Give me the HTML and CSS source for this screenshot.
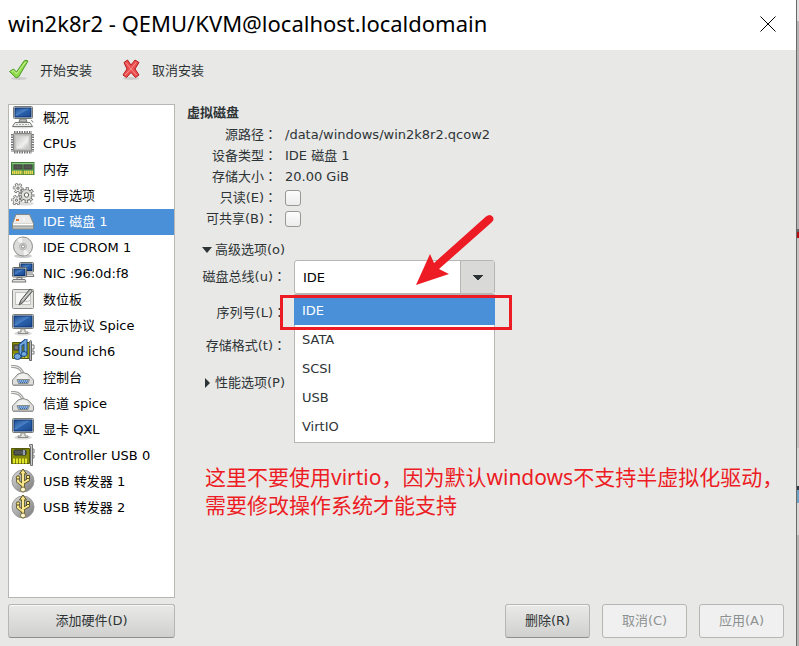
FILE: index.html
```html
<!DOCTYPE html>
<html lang="zh-CN">
<head>
<meta charset="utf-8">
<meta name="viewport" content="width=device-width, initial-scale=1">
<title>win2k8r2 - QEMU/KVM@localhost.localdomain</title>
<link rel="stylesheet" href="styles.css">
</head>
<body>
<svg class="defs" aria-hidden="true">
  <defs>
    <linearGradient id="screen" x1="0" y1="0" x2="1" y2="1"><stop offset="0" stop-color="#1c4a90"/><stop offset=".45" stop-color="#4a80c4"/><stop offset=".5" stop-color="#2b62ad"/><stop offset="1" stop-color="#1a478c"/></linearGradient>
    <linearGradient id="metal" x1="0" y1="0" x2="1" y2="1"><stop offset="0" stop-color="#c4c4c2"/><stop offset=".6" stop-color="#f0f0ee"/><stop offset="1" stop-color="#b4b4b2"/></linearGradient>
    <linearGradient id="usbgrey" x1="0" y1="0" x2="1" y2="1"><stop offset="0" stop-color="#dcdcdc"/><stop offset="1" stop-color="#777"/></linearGradient>
    <symbol id="i-computer" viewBox="0 0 24 24">
      <ellipse cx="12" cy="22" rx="11" ry="1.5" fill="#ddd"/>
      <rect x="2.5" y="1.5" width="19" height="12" rx="1" fill="#e8e8e4" stroke="#777a75"/>
      <rect x="4" y="3" width="16" height="9" fill="url(#screen)" stroke="#0c3270"/>
      <path d="M9 14h6l1 3H8z" fill="#bbb" stroke="#777a75"/>
      <path d="M4 17.5h15l2.5 4h-20z" fill="#eee" stroke="#777a75"/>
      <path d="M5 19.500h13" stroke="#aaa" stroke-dasharray="2 1"/>
      <path d="M20 15.5q2 0 2 2" fill="none" stroke="#888"/>
    </symbol>
    <symbol id="i-cpu" viewBox="0 0 24 24">
      <path d="M1.5 3v18M21.500 3v18" stroke="#777" stroke-width="3" stroke-dasharray="1.500 1"/>
      <path d="M3 1.500h18M3 21h18" stroke="#777" stroke-width="3" stroke-dasharray="1.500 1"/>
      <rect x="2.500" y="2.500" width="18" height="17.500" rx="1" fill="#b7b7b5" stroke="#858583"/>
      <rect x="5" y="5" width="13" height="13" fill="url(#metal)" stroke="#d0d0ce"/>
    </symbol>
    <symbol id="i-ram" viewBox="0 0 24 24">
      <rect x=".5" y="5.500" width="22.500" height="12" fill="#5ea559" stroke="#3d7b36"/>
      <rect x="3" y="8" width="8" height="4" fill="#555753" stroke="#444"/>
      <rect x="13" y="8" width="8" height="4" fill="#555753" stroke="#444"/>
      <path d="M1 6.500h22" stroke="#8bc884"/>
      <path d="M1 15.500h21" stroke="#edd64b" stroke-width="3.500" stroke-dasharray="1.500 .5"/>
      <path d="M12 11v6" stroke="#3d7b36"/>
    </symbol>
    <symbol id="i-gears" viewBox="0 0 24 24">
      <ellipse cx="14" cy="20.500" rx="9" ry="2" fill="#ddd"/>
      <g id="big">
        <circle cx="15.500" cy="12" r="6.500" fill="none" stroke="#62645f" stroke-width="3" stroke-dasharray="2.900 2.200" stroke-dashoffset="1.450"/>
        <circle cx="15.500" cy="12" r="5.900" fill="#62645f"/>
        <circle cx="15.500" cy="12" r="6.200" fill="none" stroke="#dededb" stroke-width="2.400" stroke-dasharray="1.500 3.370" stroke-dashoffset=".75"/>
        <circle cx="15.500" cy="12" r="5" fill="#dededb"/>
        <circle cx="15.500" cy="12" r="2.200" fill="#fff" stroke="#62645f"/>
      </g>
      <g id="small">
        <circle cx="7" cy="5.200" r="4" fill="none" stroke="#62645f" stroke-width="2.400" stroke-dasharray="2.500 1.690" stroke-dashoffset="1.250"/>
        <circle cx="7" cy="5.200" r="3.600" fill="#62645f"/>
        <circle cx="7" cy="5.200" r="3.600" fill="none" stroke="#ececea" stroke-width="2" stroke-dasharray="1.300 2.470" stroke-dashoffset=".65"/>
        <circle cx="7" cy="5.200" r="2.900" fill="#ececea"/>
        <circle cx="7" cy="5.200" r="1.100" fill="#fff" stroke="#62645f"/>
      </g>
      <g transform="translate(-1.500 12)">
        <circle cx="7" cy="5.200" r="4" fill="none" stroke="#62645f" stroke-width="2.400" stroke-dasharray="2.500 1.690" stroke-dashoffset="1.250"/>
        <circle cx="7" cy="5.200" r="3.600" fill="#62645f"/>
        <circle cx="7" cy="5.200" r="3.600" fill="none" stroke="#ececea" stroke-width="2" stroke-dasharray="1.300 2.470" stroke-dashoffset=".65"/>
        <circle cx="7" cy="5.200" r="2.900" fill="#ececea"/>
        <circle cx="7" cy="5.200" r="1.100" fill="#fff" stroke="#62645f"/>
      </g>
    </symbol>
    <symbol id="i-drive" viewBox="0 0 24 24">
      <path d="M5 5.500h13.500l4 9v4.500q0 1-1 1h-19q-1 0-1-1v-4.500z" fill="#d7d7d4" stroke="#858782"/>
      <path d="M5.500 6h12.500l3.500 8h-19z" fill="#ecebe9"/>
      <path d="M2 15.500h20" stroke="#fff"/>
      <path d="M2 17.500h20" stroke="#aaaba7" stroke-width="2"/>
      <rect x="5" y="10" width="3" height="2" fill="#e8792a"/>
      <path d="M13 8v4" stroke="#fff"/>
    </symbol>
    <symbol id="i-disc" viewBox="0 0 24 24">
      <ellipse cx="12" cy="21" rx="9" ry="2" fill="#ccc"/>
      <circle cx="12" cy="11.500" r="9.500" fill="#dcdcda" stroke="#8d8f8b"/>
      <path d="M12 11.500L6 4.500Q9 2.500 11 2.500zM12 11.500l6 7q-3 2-5 2z" fill="#f4f4f2"/>
      <circle cx="12" cy="11.500" r="3.500" fill="#d2d2d0" stroke="#b4b4b2"/>
      <circle cx="12" cy="11.500" r="1.600" fill="#fff" stroke="#888"/>
    </symbol>
    <symbol id="i-nic" viewBox="0 0 24 24">
      <rect x="8.500" y="1.500" width="14" height="9.500" rx="1" fill="#e8e8e4" stroke="#666863"/>
      <rect x="10" y="3" width="11" height="6.500" fill="url(#screen)" stroke="#0c3270"/>
      <path d="M12 13h10l1 2.500H13z" fill="#e0e0dc" stroke="#777"/>
      <rect x="1.500" y="6.500" width="14" height="9.500" rx="1" fill="#e8e8e4" stroke="#666863"/>
      <rect x="3" y="8" width="11" height="6.500" fill="url(#screen)" stroke="#0c3270"/>
      <path d="M6 16.500h5v2H6zM2 18.500h12l1 2.500H1z" fill="#e0e0dc" stroke="#777"/>
    </symbol>
    <symbol id="i-tablet" viewBox="0 0 24 24">
      <rect x="1.500" y="2.500" width="21" height="19" rx="1" fill="#e5e5e2" stroke="#8c8e89"/>
      <rect x="4.500" y="5.500" width="15" height="12" fill="#f7f7f5" stroke="#c2c3c0"/>
      <path d="M8 16q3-4 6-2t5-1" fill="none" stroke="#b8bab6"/>
      <path d="M8 18l2-5L19 2l2.500 2L12 15.500z" fill="#a5a7a3" stroke="#555753"/>
      <path d="M11 13.500L20 3.500" stroke="#e6e6e4"/>
    </symbol>
    <symbol id="i-display" viewBox="0 0 24 24">
      <ellipse cx="12" cy="20.500" rx="9" ry="2" fill="#ddd"/>
      <rect x="1.500" y="1.500" width="21" height="14" rx="1" fill="#e8e8e4" stroke="#777a75"/>
      <rect x="3" y="3" width="18" height="11" fill="url(#screen)" stroke="#0c3270"/>
      <path d="M10 16h4v3h3v1.500H7V19h3z" fill="#e4e4e0" stroke="#8b8d88"/>
    </symbol>
    <symbol id="i-sound" viewBox="0 0 24 24">
      <path d="M1.500 3.500h17v16h-17z" fill="#8a8f08" stroke="#555a05"/>
      <rect x="3" y="6" width="5" height="5" fill="#777" stroke="#333"/>
      <path d="M2 17h15" stroke="#c9ca3c" stroke-width="4" stroke-dasharray="2 1"/>
      <path d="M18.500 2.500q2-2 2 0v19h-2z" fill="#bbb" stroke="#666"/>
      <path d="M21 6h2v4h-2M21 12h2v3h-2" fill="none" stroke="#777"/>
      <path d="M9.500 18.500V6q3-2 5-4v13" fill="none" stroke="#174784" stroke-width="4"/>
      <path d="M9.500 17V6q3-2 5-4v13" fill="none" stroke="#72a7df" stroke-width="2"/>
      <ellipse cx="6.500" cy="17.500" rx="3.500" ry="3" fill="#72a7df" stroke="#174784"/>
      <ellipse cx="13" cy="15" rx="3" ry="2.500" fill="#72a7df" stroke="#174784"/>
    </symbol>
    <symbol id="i-serial" viewBox="0 0 24 24">
      <path d="M0 1.500q9-1 12 7" fill="none" stroke="#a0a29e" stroke-width="3"/>
      <path d="M0 1.500q9-1 12 7" fill="none" stroke="#eee"/>
      <path d="M7 9q5-3 10 0l5.500 6v4q0 1-1 1h-19q-1 0-1-1v-4z" fill="#dededc" stroke="#8b8d88"/>
      <path d="M8 10q4-2 8 0l2 4H5z" fill="#f1f1ef"/>
      <path d="M6 14.500h12.500l-1.500 4H7.500z" fill="#88aedb" stroke="#8b8d88"/>
      <path d="M8 16h9M9 17.500h7" stroke="#3465a4" stroke-dasharray="1 1"/>
      <path d="M2 20.500h20" stroke="#999"/>
    </symbol>
    <symbol id="i-card" viewBox="0 0 24 24">
      <path d="M.5 5.500h18v15H.5z" fill="#858a09" stroke="#555a05"/>
      <rect x="3" y="7" width="12" height="5" rx="1" fill="#555753" stroke="#2e3436"/>
      <path d="M13 7v5" stroke="#92a3b5" stroke-width="2"/>
      <path d="M3 15.500v5M6 15.500v5M9 15.500v5M12 15.500v5M15 15.500v5" stroke="#e1e52e" stroke-width="2"/>
      <path d="M18.500 1.500h3v21h-2v-19h-1z" fill="#ccc" stroke="#70726e"/>
      <path d="M21 6h2v4h-2M21 12h2v3h-2" fill="none" stroke="#777"/>
    </symbol>
    <symbol id="i-usb" viewBox="0 0 24 24">
      <circle cx="12" cy="12" r="11" fill="url(#usbgrey)" stroke="#999"/>
      <g fill="none" stroke="#55501f" stroke-width="3.500"><path d="M12 21V3M12 16.500l-5-4V9M12 14l5-3V7"/></g>
      <path d="M12 0l3.500 5h-7z" fill="#fbe68b" stroke="#55501f"/>
      <g fill="none" stroke="#fbe68b" stroke-width="2"><path d="M12 21V4M12 16.500l-5-4V9M12 14l5-3V7"/></g>
      <g fill="#fbe68b" stroke="#55501f"><circle cx="7" cy="8.500" r="1.700"/><path d="M15.500 6.500h3v3h-3z"/></g>
      <circle cx="12" cy="20.500" r="2.500" fill="#fff6cf" stroke="#77703c"/>
    </symbol>
  </defs>
</svg>
<div class="desktop">
  <main class="window">
    <header class="titlebar">
      <h1>win2k8r2 - QEMU/KVM@localhost.localdomain</h1>
      <button class="close" aria-label="关闭"><svg viewBox="0 0 16 16" width="16" height="16"><path d="M.5.5l15 15M15.500.5l-15 15" stroke="#000" fill="none"/></svg></button>
    </header>
    <div class="toolbar">
      <button class="tool"><svg viewBox="0 0 22 22" width="22" height="22"><ellipse cx="11" cy="19.500" rx="8" ry="1.500" fill="#ccccca"/><path d="M1.500 12.500l4-2.500 3 3L16 2q2-1.500 4 0l-9.500 16-2.500.8z" fill="#8fd94a" stroke="#4e9a2a" stroke-linejoin="round"/><path d="M3.500 12.500l2-1 3 3.500L17.500 3" fill="none" stroke="#c9f49a"/></svg>开始安装</button>
      <button class="tool"><svg viewBox="0 0 22 22" width="22" height="22"><ellipse cx="11" cy="19.500" rx="8" ry="1.500" fill="#ccccca"/><path d="M4 3.500l3.500-2.500 3.500 5 4-5L19 3.500l-4 6.500 4 6-3.500 2.500-4.500-5-4.500 5L3 16l4-6z" fill="#ec5050" stroke="#b51d1d" stroke-linejoin="round"/><path d="M6 3.500l5 6.500 5-6.500M5 16l6-6 5.500 6" fill="none" stroke="#f58e8e"/></svg>取消安装</button>
    </div>
    <div class="body">
      <aside class="sidebar">
        <ul class="devices">
          <li><svg><use href="#i-computer"/></svg>概况</li>
          <li><svg><use href="#i-cpu"/></svg>CPUs</li>
          <li><svg><use href="#i-ram"/></svg>内存</li>
          <li><svg><use href="#i-gears"/></svg>引导选项</li>
          <li class="selected" aria-current="true"><svg><use href="#i-drive"/></svg>IDE 磁盘 1</li>
          <li><svg><use href="#i-disc"/></svg>IDE CDROM 1</li>
          <li><svg><use href="#i-nic"/></svg>NIC :96:0d:f8</li>
          <li><svg><use href="#i-tablet"/></svg>数位板</li>
          <li><svg><use href="#i-display"/></svg>显示协议 Spice</li>
          <li><svg><use href="#i-sound"/></svg>Sound ich6</li>
          <li><svg><use href="#i-serial"/></svg>控制台</li>
          <li><svg><use href="#i-serial"/></svg>信道 spice</li>
          <li><svg><use href="#i-display"/></svg>显卡 QXL</li>
          <li><svg><use href="#i-card"/></svg>Controller USB 0</li>
          <li><svg><use href="#i-usb"/></svg>USB 转发器 1</li>
          <li><svg><use href="#i-usb"/></svg>USB 转发器 2</li>
        </ul>
        <button class="btn">添加硬件(D)</button>
      </aside>
      <section class="details">
        <h2>虚拟磁盘</h2>
        <div class="info">
          <span>源路径<span class="colon" lang="zh-TW">：</span></span><span>/data/windows/win2k8r2.qcow2</span>
          <span>设备类型<span class="colon" lang="zh-TW">：</span></span><span>IDE 磁盘 1</span>
          <span>存储大小<span class="colon" lang="zh-TW">：</span></span><span>20.00 GiB</span>
          <label for="readonly">只读(E)<span class="colon" lang="zh-TW">：</span></label><input type="checkbox" id="readonly">
          <label for="shareable">可共享(B)<span class="colon" lang="zh-TW">：</span></label><input type="checkbox" id="shareable">
        </div>
        <button class="expander" aria-expanded="true"><svg viewBox="0 0 10 10" width="10" height="10"><path d="M0 2h10L5 8z" fill="#2e3436"/></svg>高级选项(o)</button>
        <div class="advanced">
          <label for="bus">磁盘总线(u)<span class="colon" lang="zh-TW">：</span></label>
          <div class="combo">
            <select id="bus"><option>IDE</option><option>SATA</option><option>SCSI</option><option>USB</option><option>VirtIO</option></select>
            <ul class="menu" role="listbox" aria-label="磁盘总线">
              <li role="option" aria-selected="true" class="active">IDE</li>
              <li role="option">SATA</li>
              <li role="option">SCSI</li>
              <li role="option">USB</li>
              <li role="option">VirtIO</li>
            </ul>
            <div class="highlight"></div>
            <svg class="arrow" viewBox="0 0 80 72" width="80" height="72" aria-hidden="true"><path d="M0 71l14-31 4 9L70 2.500q4-3 6.500 0t-1 6L23 55l10 5z" fill="#ed1c24"/></svg>
          </div>
          <span>序列号(L)<span class="colon" lang="zh-TW">：</span></span>
          <span>存储格式(t)<span class="colon" lang="zh-TW">：</span></span>
        </div>
        <button class="expander" aria-expanded="false"><svg viewBox="0 0 10 10" width="10" height="10"><path d="M3 0l5 5-5 5z" fill="#2e3436"/></svg>性能选项(P)</button>
        <p class="note">这里不要使用virtio，因为默认windows不支持半虚拟化驱动，<br>需要修改操作系统才能支持</p>
        <footer class="actions">
          <button class="btn">删除(R)</button>
          <button class="btn" disabled>取消(C)</button>
          <button class="btn" disabled>应用(A)</button>
        </footer>
      </section>
    </div>
  </main>
  <div class="backdrop"></div>
</div>
</body>
</html>
```
FILE: styles.css
```css
* { box-sizing: border-box; }
body {
  margin: 0;
  font: 13px/21px "DejaVu Sans", "Noto Sans CJK SC", sans-serif;
  color: #2e3436;
  background: #e8e8e6;
}
button, select, input { font: inherit; color: inherit; margin: 0; }
ul, h1, h2, p { margin: 0; padding: 0; }
ul { list-style: none; }
.defs { position: absolute; width: 0; height: 0; }
.desktop { display: flex; min-height: 100vh; }
.window { flex: 1; display: flex; flex-direction: column; border-right: 1px solid #6a6a6a; min-width: 0; }
.backdrop {
  width: 2px;
  background: linear-gradient(#dedede 0 21px, #b4b4b4 21px 229px, #666 229px 232px, #b01218 232px 238px, #c4c3c1 238px 448px, #d6d6d5 448px 486px, #333a44 486px 490px, #6fa3c4 490px 503px, #d6d6d5 503px 535px, #b4b4b2 535px);
}
.titlebar {
  height: 50px;
  background: #fff;
  display: flex;
  align-items: center;
  justify-content: space-between;
  padding: 0 20px 2px 8px;
}
.titlebar h1 { font: 22px/32px "Noto Sans", sans-serif; padding-bottom: 2px; color: #000; white-space: nowrap; }
.close { border: 0; background: none; padding: 0; display: flex; }
.toolbar { display: flex; gap: 28px; padding: 9px 8px 23px; }
.tool { display: flex; align-items: center; gap: 10px; height: 22px; padding: 0; border: 0; background: none; }
.body { flex: 1; display: flex; gap: 12px; padding: 0 12px 8px 8px; }
.sidebar { width: 167px; display: flex; flex-direction: column; gap: 6px; }
.devices { flex: 1; background: #fff; border: 1px solid #b6b6b3; color: #000; }
.devices li { display: flex; align-items: center; gap: 8px; height: 26px; padding: 0 0 2px 2px; white-space: nowrap; }
.devices svg { width: 24px; height: 24px; flex: none; }
.devices .selected { background: #4a90d9; color: #fff; }
.btn {
  height: 34px;
  min-width: 85px;
  padding: 0 12px 2px;
  border: 1px solid #b6b6b3;
  border-bottom-color: #8e8e8a;
  border-radius: 3px;
  background: linear-gradient(#e9e9e7, #d0d0ce);
  box-shadow: inset 0 1px #f8f8f7;
}
.btn:disabled { background: #f0f0f0; border-color: #b6b6b3; box-shadow: none; color: #8d9091; }
.details { flex: 1; display: flex; flex-direction: column; align-items: flex-start; min-width: 0; }
.details h2 { font-size: 13px; line-height: 17px; margin-bottom: 3px; }
.info { display: grid; grid-template-columns: 90px auto; grid-auto-rows: 21px; column-gap: 8px; align-items: center; }
.info > :nth-child(odd) { text-align: right; }
.colon { font-family: "Noto Sans CJK TC", sans-serif; line-height: 1; }
.info input {
  appearance: none;
  width: 16px;
  height: 16px;
  border: 1px solid #999994;
  border-radius: 3px;
  background: linear-gradient(#fdfdfd, #ececec);
}
.expander { display: flex; align-items: center; gap: 3px; height: 21px; padding: 0; margin: 10px 0 0 15px; border: 0; background: none; }
.advanced { display: grid; grid-template-columns: 99px 201px; grid-template-rows: 36px 33px 33px; column-gap: 8px; }
.advanced > label, .advanced > span { grid-column: 1; text-align: right; line-height: 33px; white-space: nowrap; }
.combo { position: relative; grid-column: 2; }
.combo select {
  display: block;
  appearance: none;
  width: 100%;
  height: 34px;
  padding: 0 8px;
  border: 1px solid #b6b6b3;
  border-radius: 3px;
  background: #fff;
  color: #000;
}
.combo::after {
  content: "";
  position: absolute;
  top: 1px;
  right: 1px;
  width: 33px;
  height: 32px;
  border-left: 1px solid #b6b6b3;
  background: conic-gradient(from -45deg at 50% 100%, #2e3436 90deg, transparent 0) center / 10px 5px no-repeat, #d9d9d7;
  pointer-events: none;
}
.menu { position: absolute; top: 34px; left: 0; right: 0; padding: 1px 0; background: #fff; border: 1px solid #b6b6b3; }
.menu li { height: 29px; margin: 0 -1px; padding-left: 8px; line-height: 29px; }
.menu .active { background: #4a90d9; color: #fff; }
.highlight { position: absolute; top: 35px; left: -14px; right: -17px; height: 35px; border: 3px solid #ed1c24; }
.arrow { position: absolute; z-index: 1; top: -46px; left: 122px; }
.note { font: 21px/28px "Noto Sans", "Noto Sans CJK SC", sans-serif; color: #ed1c24; margin: 70px 0 0 18px; white-space: nowrap; }
.actions { display: flex; gap: 12px; margin-top: auto; align-self: flex-end; }
```
